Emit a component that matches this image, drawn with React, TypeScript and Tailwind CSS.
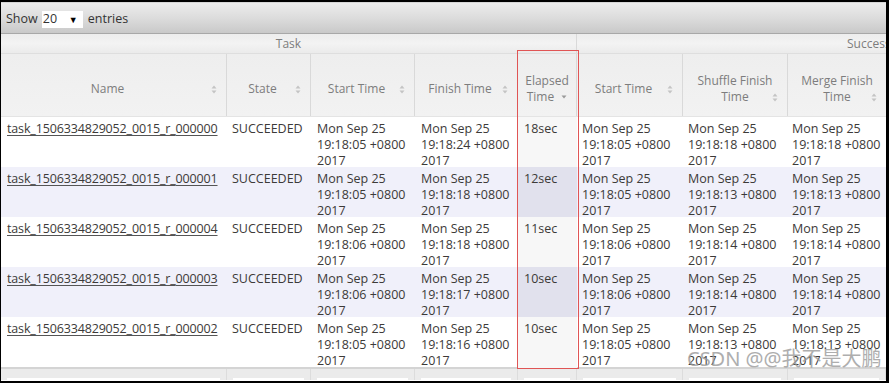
import React from "react";

const rows = [
  { id: "000000", s: "19:18:05", f: "19:18:24", e: "18sec", st: "19:18:05", sh: "19:18:18", m: "19:18:18" },
  { id: "000001", s: "19:18:05", f: "19:18:18", e: "12sec", st: "19:18:05", sh: "19:18:13", m: "19:18:13" },
  { id: "000004", s: "19:18:06", f: "19:18:18", e: "11sec", st: "19:18:06", sh: "19:18:14", m: "19:18:14" },
  { id: "000003", s: "19:18:06", f: "19:18:17", e: "10sec", st: "19:18:06", sh: "19:18:14", m: "19:18:14" },
  { id: "000002", s: "19:18:05", f: "19:18:16", e: "10sec", st: "19:18:05", sh: "19:18:13", m: "19:18:13" },
];

const font = { fontFamily: '"Open Sans", "Noto Sans", sans-serif' };
const cols = "grid grid-cols-[226px_84px_104px_103px_59px_106px_105px_98px]";

function SortBoth() {
  return (
    <svg width="6" height="9" viewBox="0 0 6 9" className="shrink-0">
      <path d="M3 0.5 L5.5 3.5 L0.5 3.5 Z" fill="#c4c4c4" />
      <path d="M3 8.5 L5.5 5.5 L0.5 5.5 Z" fill="#c4c4c4" />
    </svg>
  );
}
function SortDesc() {
  return (
    <svg width="6" height="4" viewBox="0 0 6 4" className="shrink-0">
      <path d="M0.5 0.5 L5.5 0.5 L3 3.5 Z" fill="#9a9a9a" />
    </svg>
  );
}

function Head({
  children,
  last = false,
  iconTop = 31,
  shift = true,
}: {
  children: React.ReactNode;
  last?: boolean;
  iconTop?: number;
  shift?: boolean;
}) {
  return (
    <div
      className={`relative flex items-center justify-center h-full pt-[7px] ${shift ? "pr-[12px]" : ""} ${
        last ? "" : "border-r border-[#d9d9d9]"
      }`}
    >
      <div className="text-center leading-[16px] text-[#7d7d7d] text-[12px]">{children}</div>
      <div className="absolute right-[9px]" style={{ top: iconTop }}>
        <SortBoth />
      </div>
    </div>
  );
}

function Date({ t }: { t: string }) {
  return (
    <>
      Mon Sep 25
      <br />
      {t} +0800
      <br />
      2017
    </>
  );
}

export default function App() {
  return (
    <div className="w-[889px] h-[383px] bg-black pt-[2px] pl-[1px] pr-[3px] pb-[2px]" style={font}>
      <div className="relative w-[885px] h-[379px] bg-white overflow-hidden">
        {/* toolbar */}
        <div className="h-[32px] flex items-center pl-[5px] pt-[3px] text-[12.5px] text-[#333] border-b border-[#a8a8a8] bg-gradient-to-b from-[#ececec] via-[#dcdcdc] to-[#c9c9c9] border-t border-t-[#d6d6d6]">
          <span>Show</span>
          <div className="ml-[4px] w-[41px] h-[17px] bg-white flex items-center justify-between pl-[1px] pr-[5px]">
            <span className="leading-none">20</span>
            <span className="text-[9px] text-black leading-none">▼</span>
          </div>
          <span className="ml-[5px]">entries</span>
        </div>
        {/* group header */}
        <div className="h-[20px] flex text-[12px] text-[#7d7d7d] bg-gradient-to-b from-[#ededed] via-[#f3f3f3] to-[#ebebeb] border-b border-[#dedede]">
          <div className="w-[576px] shrink-0 border-r border-[#d9d9d9] flex items-center justify-center leading-none">
            Task
          </div>
          <div className="flex-1 min-w-0 overflow-hidden flex items-center pl-[270px] leading-none whitespace-nowrap">
            Successful
          </div>
        </div>
        {/* header */}
        <div className={`h-[63px] ${cols} bg-gradient-to-b from-[#eeeeee] via-[#f0f0f0] to-[#f2f2f2] border-b border-[#e4e4e4]`}>
          <Head>Name</Head>
          <Head>State</Head>
          <Head>Start Time</Head>
          <Head>Finish Time</Head>
          <div className="relative flex items-center justify-center h-full pt-[7px] border-r border-[#d9d9d9]">
            <div className="text-center leading-[16px] text-[#7d7d7d] text-[12px]">
              Elapsed
              <br />
              <span className="inline-flex items-center gap-[7px]">
                Time <SortDesc />
              </span>
            </div>
          </div>
          <Head>Start Time</Head>
          <Head iconTop={39} shift={false}>
            Shuffle Finish
            <br />
            Time
          </Head>
          <Head last iconTop={39} shift={false}>
            Merge Finish
            <br />
            Time
          </Head>
        </div>
        {/* body */}
        <div className="text-[12.5px] text-[#3c3a38] leading-[16px]">
          {rows.map((r, i) => {
            const odd = i % 2 === 1;
            return (
              <div key={r.id} className={`h-[50px] ${cols} ${odd ? "bg-[#f0f0fa]" : "bg-white"}`}>
                <div className="pl-[6px] pt-[4px] whitespace-nowrap tracking-[-0.15px]">
                  <span className="underline underline-offset-[2px] decoration-[#555]">
                    task_1506334829052_0015_r_{r.id}
                  </span>
                </div>
                <div className="pl-[5px] pt-[4px]">SUCCEEDED</div>
                <div className="pl-[6px] pt-[4px]">
                  <Date t={r.s} />
                </div>
                <div className="pl-[6px] pt-[4px]">
                  <Date t={r.f} />
                </div>
                <div className={`pl-[6px] pt-[4px] ${odd ? "bg-[#e1e1ed]" : "bg-[#f7f7f7]"}`}>{r.e}</div>
                <div className="pl-[5px] pt-[4px]">
                  <Date t={r.st} />
                </div>
                <div className="pl-[5px] pt-[4px]">
                  <Date t={r.sh} />
                </div>
                <div className="pl-[4px] pt-[4px] whitespace-nowrap">
                  <Date t={r.m} />
                </div>
              </div>
            );
          })}
        </div>
        {/* footer */}
        <div className={`h-[13px] border-t-2 border-[#d4d4d4] bg-[#ebebeb] ${cols}`}>
          {[0, 1, 2, 3, 4, 5, 6, 7].map((k) => (
            <div key={k} className="border-r border-[#dcdcdc] flex items-end px-[6px]">
              <div className="h-[2px] w-full bg-white" />
            </div>
          ))}
        </div>
        {/* red highlight */}
        <div className="absolute left-[516px] top-[48px] w-[62px] h-[319px] border border-[#e05555] pointer-events-none" />
        {/* watermark */}
        <div
          className="absolute left-[686px] top-[344px] text-[20px] leading-[26px] text-[#9a9a9a] opacity-80 whitespace-nowrap pointer-events-none"
          style={{ fontFamily: '"Noto Sans", "Noto Sans CJK SC", sans-serif' }}
        >
          CSDN @@我不是大鹏
        </div>
      </div>
    </div>
  );
}
